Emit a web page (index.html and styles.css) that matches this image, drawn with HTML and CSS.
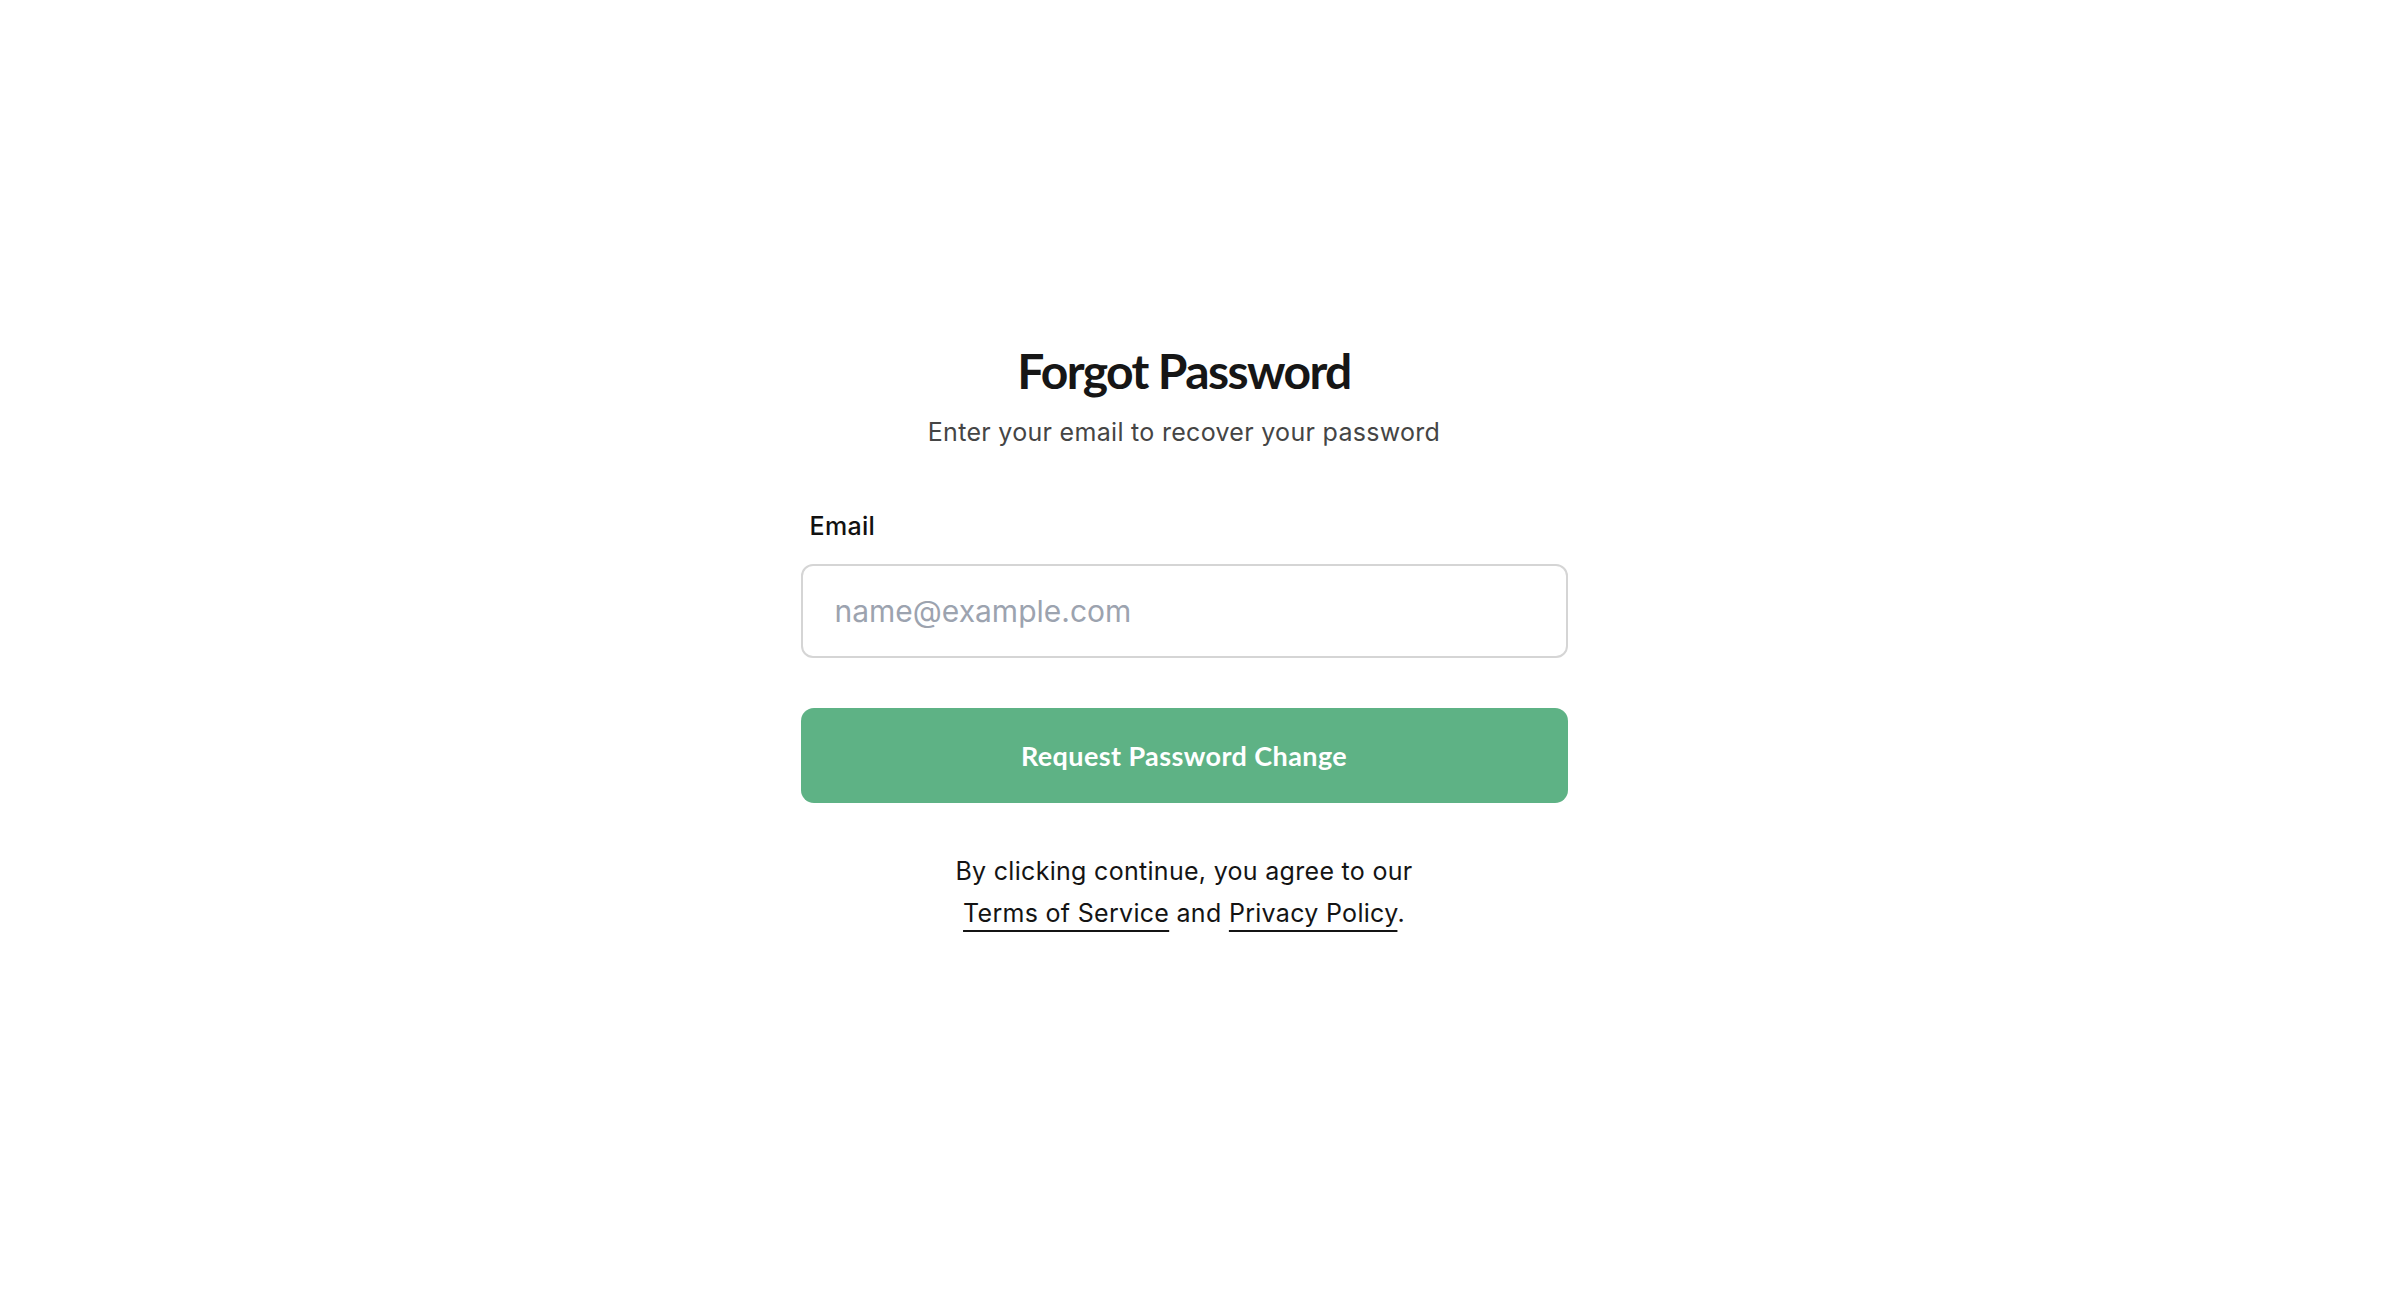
FILE: index.html
```html
<!DOCTYPE html>
<html lang="en">
<head>
<meta charset="utf-8">
<title>Forgot Password</title>
<link rel="stylesheet" href="styles.css">
</head>
<body>
<main class="page">
  <section class="card">
    <header class="head">
      <h1 class="title">Forgot Password</h1>
      <p class="subtitle">Enter your email to recover your password</p>
    </header>
    <form class="form">
      <label class="label" for="email">Email</label>
      <input class="input" id="email" type="email" placeholder="name@example.com">
      <button class="button" type="button">Request Password Change</button>
    </form>
    <p class="legal">By clicking continue, you agree to our<br><a class="link" href="#">Terms of Service</a> and <a class="link" href="#">Privacy Policy</a>.</p>
  </section>
</main>
</body>
</html>
```

FILE: styles.css
```css
* { box-sizing: border-box; }
html, body { margin: 0; padding: 0; background: #ffffff; }
body {
  font-family: "Inter", "Lato", "Liberation Sans", sans-serif;
  color: #141414;
}
.page {
  display: flex;
  justify-content: center;
  padding: 343px 22px 0 0;
  min-height: 1304px;
}
.card {
  width: 767px;
  display: flex;
  flex-direction: column;
}
.head {
  display: flex;
  flex-direction: column;
  align-items: center;
  gap: 17px;
}
.title {
  margin: 0;
  font-family: "Lato", "Inter", sans-serif;
  font-size: 48px;
  line-height: 56px;
  font-weight: 700;
  color: #161616;
  letter-spacing: -1.6px;
}
.subtitle {
  margin: 0;
  font-size: 25px;
  line-height: 32px;
  color: #454545;
  letter-spacing: 0.3px;
}
.form {
  display: flex;
  flex-direction: column;
  margin-top: 62px;
}
.label {
  font-size: 25px;
  line-height: 32px;
  font-weight: 500;
  color: #111111;
  padding-left: 9px;
  letter-spacing: 0.3px;
}
.input {
  margin-top: 22px;
  height: 94px;
  border: 2px solid #d5d5d5;
  border-radius: 12px;
  padding: 0 32px;
  font-family: inherit;
  font-size: 30px;
  color: #111;
  background: #fff;
  outline: none;
}
.input::placeholder { color: #9ca3af; }
.button {
  margin-top: 50px;
  height: 95px;
  border: none;
  border-radius: 13px;
  background: #5eb285;
  color: #ffffff;
  font-family: "Lato", "Inter", sans-serif;
  font-size: 27px;
  font-weight: 700;
  letter-spacing: 0.4px;
  cursor: pointer;
}
.legal {
  margin: 47px 0 0;
  text-align: center;
  font-size: 25px;
  line-height: 42px;
  color: #141414;
  letter-spacing: 0.3px;
}
.link {
  color: #141414;
  text-decoration: underline;
  text-decoration-thickness: 2px;
  text-underline-offset: 8px;
}
```
